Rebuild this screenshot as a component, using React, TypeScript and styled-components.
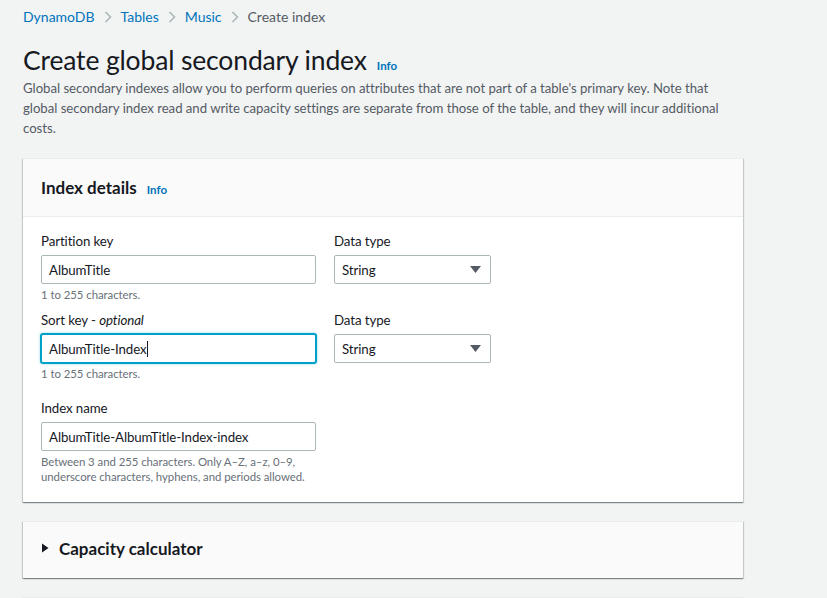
import React from "react";
import styled, { createGlobalStyle } from "styled-components";

const GlobalStyle = createGlobalStyle`
  body {
    margin: 0;
    background: #f2f3f3;
    font-family: Lato, "Liberation Sans", sans-serif;
    color: #16191f;
  }
`;

const Page = styled.div`
  width: 720px;
  padding: 7px 0 0 23px;
`;

const Breadcrumbs = styled.nav`
  display: flex;
  align-items: center;
  font-size: 14px;
  line-height: 20px;
  gap: 9px;
`;

const Crumb = styled.a`
  color: #0073bb;
  text-decoration: none;
`;

const Current = styled.span`
  color: #545b64;
`;

const Chevron = () => (
  <svg width="8" height="12" viewBox="0 0 8 12">
    <path d="M1.5 1 L6.5 6 L1.5 11" fill="none" stroke="#aab7b8" strokeWidth="1.6" />
  </svg>
);

const TitleRow = styled.div`
  display: flex;
  align-items: baseline;
  gap: 10px;
  margin-top: 15px;
`;

const Title = styled.h1`
  margin: 0;
  font-size: 26.5px;
  letter-spacing: -0.15px;
  font-weight: 400;
  line-height: 36px;
`;

const Info = styled.a`
  color: #0073bb;
  font-size: 11.5px;
  font-weight: 700;
  text-decoration: none;
`;

const Description = styled.p`
  margin: 0;
  white-space: nowrap;
  font-size: 13.2px;
  letter-spacing: -0.03px;
  line-height: 20px;
  color: #545b64;
`;

const Panel = styled.section<{ $muted?: boolean }>`
  background: ${(p) => (p.$muted ? "#fafafa" : "#fff")};
  border-top: 1px solid #eaeded;
  box-shadow: 0 1px 1px 0 rgba(0, 28, 36, 0.3), 1px 1px 1px 0 rgba(0, 28, 36, 0.15),
    -1px 1px 1px 0 rgba(0, 28, 36, 0.15);
  margin-top: ${(p) => (p.$muted ? "19px" : "20px")};
`;

const PanelHeader = styled.header`
  display: flex;
  align-items: baseline;
  gap: 10px;
  height: 58px;
  box-sizing: border-box;
  padding: 17px 18px 0;
  background: #fafafa;
  border-bottom: 1px solid #eaeded;
`;

const PanelTitle = styled.h2`
  margin: 0;
  font-size: 17px;
  font-weight: 700;
  line-height: 24px;
`;

const PanelBody = styled.div`
  padding: 14px 18px 18px;
  display: flex;
  flex-direction: column;
`;

const Row = styled.div<{ $gap?: number }>`
  display: flex;
  gap: 18px;
  margin-top: ${(p) => p.$gap ?? 0}px;
`;

const Field = styled.div<{ $width: number }>`
  width: ${(p) => p.$width}px;
  display: flex;
  flex-direction: column;
`;

const Label = styled.label`
  font-size: 13.3px;
  letter-spacing: -0.1px;
  line-height: 20px;
  margin-bottom: 4px;

  em {
    font-style: italic;
  }
`;

const Input = styled.div<{ $focused?: boolean }>`
  height: 29px;
  box-sizing: border-box;
  display: flex;
  align-items: center;
  padding: 0 7px;
  font-size: 13.3px;
  letter-spacing: -0.1px;
  background: #fff;
  border: 1px solid ${(p) => (p.$focused ? "#00a1c9" : "#aab7b8")};
  border-radius: 2px;
  box-shadow: ${(p) => (p.$focused ? "0 0 0 1px #00a1c9, 0 0 3px 1px rgba(0,161,201,0.4)" : "none")};
`;

const Caret = styled.span`
  display: inline-block;
  width: 1px;
  height: 16px;
  background: #16191f;
`;

const Select = styled(Input)`
  justify-content: space-between;
  padding-right: 9px;
`;

const Hint = styled.div`
  font-size: 11.4px;
  letter-spacing: -0.05px;
  line-height: 15px;
  color: #687078;
  margin-top: 3px;
`;

const Expander = styled.div`
  display: flex;
  align-items: center;
  gap: 10px;
  height: 56px;
  box-sizing: border-box;
  padding: 0 18px 4px;
  font-size: 17px;
  font-weight: 700;
`;

const Triangle = ({ down }: { down?: boolean }) =>
  down ? (
    <svg width="11" height="7" viewBox="0 0 11 7">
      <path d="M0 0 H11 L5.5 7 Z" fill="#545b64" />
    </svg>
  ) : (
    <svg width="8" height="10" viewBox="0 0 8 10">
      <path d="M1 0.5 V9.5 L7.5 5 Z" fill="#16191f" />
    </svg>
  );

export default function App() {
  return (
    <>
      <GlobalStyle />
      <Page>
        <Breadcrumbs>
          <Crumb>DynamoDB</Crumb>
          <Chevron />
          <Crumb>Tables</Crumb>
          <Chevron />
          <Crumb>Music</Crumb>
          <Chevron />
          <Current>Create index</Current>
        </Breadcrumbs>

        <TitleRow>
          <Title>Create global secondary index</Title>
          <Info>Info</Info>
        </TitleRow>
        <Description>
          Global secondary indexes allow you to perform queries on attributes that are not part of a
          table's primary key. Note that
          <br />
          global secondary index read and write capacity settings are separate from those of the
          table, and they will incur additional
          <br />
          costs.
        </Description>

        <Panel>
          <PanelHeader>
            <PanelTitle>Index details</PanelTitle>
            <Info>Info</Info>
          </PanelHeader>
          <PanelBody>
            <Row>
              <Field $width={275}>
                <Label>Partition key</Label>
                <Input>AlbumTitle</Input>
                <Hint>1 to 255 characters.</Hint>
              </Field>
              <Field $width={157}>
                <Label>Data type</Label>
                <Select>
                  String
                  <Triangle down />
                </Select>
              </Field>
            </Row>
            <Row $gap={8}>
              <Field $width={275}>
                <Label>
                  Sort key - <em>optional</em>
                </Label>
                <Input $focused>
                  AlbumTitle-Index
                  <Caret />
                </Input>
                <Hint>1 to 255 characters.</Hint>
              </Field>
              <Field $width={157}>
                <Label>Data type</Label>
                <Select>
                  String
                  <Triangle down />
                </Select>
              </Field>
            </Row>
            <Row $gap={17}>
              <Field $width={275}>
                <Label>Index name</Label>
                <Input>AlbumTitle-AlbumTitle-Index-index</Input>
                <Hint>
                  Between 3 and 255 characters. Only A–Z, a–z, 0–9, underscore characters, hyphens,
                  and periods allowed.
                </Hint>
              </Field>
            </Row>
          </PanelBody>
        </Panel>

        <Panel $muted>
          <Expander>
            <Triangle />
            Capacity calculator
          </Expander>
        </Panel>

        <Panel $muted>
          <Expander />
        </Panel>
      </Page>
    </>
  );
}
